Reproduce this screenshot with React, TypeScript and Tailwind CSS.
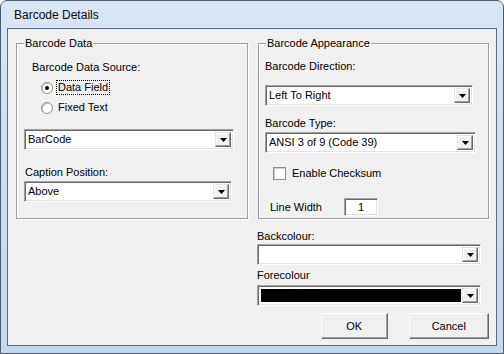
import React from 'react';

const font = "font-['Liberation_Sans',Arial,sans-serif]";

const Arrow = () => (
  <svg width="7" height="4" viewBox="0 0 7 4">
    <path d="M0 0H7L3.5 4Z" fill="#000" />
  </svg>
);

interface ComboProps {
  width: string;
  text?: string;
  black?: boolean;
}

const Combo: React.FC<ComboProps> = ({ width, text, black }) => (
  <div
    className={`${width} h-[21px] flex items-stretch border border-t-[#a0a0a0] border-l-[#a0a0a0] border-b-white border-r-white bg-white shadow-[inset_1px_1px_0_#696969,inset_-1px_-1px_0_#e3e3e3] p-[2px]`}
  >
    <div className="flex-1 flex items-center pl-[1px] pr-[1px]">
      {black ? (
        <div className="w-full h-[13px] bg-black" />
      ) : (
        <span className="text-[11px] leading-[13px] text-black">{text}</span>
      )}
    </div>
    <div className="w-[16px] flex items-center justify-center bg-[#f0f0f0] border border-t-[#e3e3e3] border-l-[#e3e3e3] border-b-[#696969] border-r-[#696969] shadow-[inset_-1px_-1px_0_#a0a0a0,inset_1px_1px_0_#fff]">
      <Arrow />
    </div>
  </div>
);

const Group: React.FC<{ title: string; className: string; children: React.ReactNode }> = ({
  title,
  className,
  children,
}) => (
  <div className={`relative border border-[#a0a0a0] shadow-[inset_1px_1px_0_#fff,1px_1px_0_#fff] ${className}`}>
    <span className="absolute -top-[7px] left-[7px] bg-[#f0f0f0] px-[1px] text-[11px] leading-[13px] text-black">
      {title}
    </span>
    {children}
  </div>
);

const Radio: React.FC<{ checked?: boolean; label: string; focus?: boolean }> = ({ checked, label, focus }) => (
  <div className="flex items-center h-[13px]">
    <div className="w-[12px] h-[12px] rounded-full border border-[#8f8f8f] bg-white shadow-[inset_1px_1px_0_#c8c8c8] flex items-center justify-center">
      {checked && <div className="w-[4px] h-[4px] rounded-full bg-black" />}
    </div>
    <span
      className={`ml-[4px] px-[1px] text-[11px] leading-[13px] text-black ${
        focus ? 'outline-1 outline-dotted outline-black' : ''
      }`}
    >
      {label}
    </span>
  </div>
);

const Button: React.FC<{ width: string; label: string }> = ({ width, label }) => (
  <div
    className={`${width} h-[26px] flex items-center justify-center bg-[#f0f0f0] border border-t-white border-l-white border-b-[#696969] border-r-[#696969] shadow-[inset_-1px_-1px_0_#a0a0a0] text-[11px] text-black`}
  >
    {label}
  </div>
);

const App: React.FC = () => {
  return (
    <div className={`${font} w-[504px] h-[354px] overflow-hidden`}>
      <div className="w-full h-full flex flex-col rounded-t-[7px] border border-[#4b5c70] bg-gradient-to-b from-[#d9e6f4] via-[#ccdcef] to-[#c3d7ee] px-[6px] pb-[7px]">
        {/* Title bar */}
        <div className="h-[27px] flex items-center pl-[7px] text-[12px] text-[#0a0a0a]">Barcode Details</div>

        {/* Client area */}
        <div className="flex-1 border border-[#5a6a80] bg-[#f0f0f0] pl-[8px] pt-[14px] flex gap-[9px]">
          {/* Left column */}
          <Group title="Barcode Data" className="w-[232px] h-[176px] flex flex-col">
            <span className="ml-[15px] mt-[17px] text-[11px] leading-[13px] text-black">Barcode Data Source:</span>
            <div className="ml-[24px] mt-[7px] flex flex-col gap-[7px]">
              <Radio checked label="Data Field" focus />
              <Radio label="Fixed Text" />
            </div>
            <div className="ml-[7px] mt-[15px]">
              <Combo width="w-[210px]" text="BarCode" />
            </div>
            <span className="ml-[8px] mt-[16px] text-[11px] leading-[13px] text-black">Caption Position:</span>
            <div className="ml-[7px] mt-[2px]">
              <Combo width="w-[208px]" text="Above" />
            </div>
          </Group>

          {/* Right column */}
          <div className="w-[232px] flex flex-col">
            <Group title="Barcode Appearance" className="ml-[1px] w-[231px] h-[176px] flex flex-col">
              <span className="ml-[6px] mt-[16px] text-[11px] leading-[13px] text-black">Barcode Direction:</span>
              <div className="ml-[6px] mt-[12px]">
                <Combo width="w-[208px]" text="Left To Right" />
              </div>
              <span className="ml-[6px] mt-[11px] text-[11px] leading-[13px] text-black">Barcode Type:</span>
              <div className="ml-[6px] mt-[2px]">
                <Combo width="w-[211px]" text="ANSI 3 of 9 (Code 39)" />
              </div>
              <div className="ml-[14px] mt-[14px] flex items-center h-[13px]">
                <div className="w-[13px] h-[13px] border border-[#8f8f8f] bg-white shadow-[inset_1px_1px_0_#d0d0d0]" />
                <span className="ml-[6px] text-[11px] leading-[13px] text-black">Enable Checksum</span>
              </div>
              <div className="ml-[11px] mt-[18px] flex items-center">
                <span className="w-[74px] text-[11px] leading-[13px] text-black">Line Width</span>
                <div className="w-[34px] h-[18px] flex items-center justify-center bg-white border border-t-[#a0a0a0] border-l-[#a0a0a0] border-b-white border-r-white shadow-[inset_1px_1px_0_#696969,inset_-1px_-1px_0_#e3e3e3] text-[11px] text-black">
                  1
                </div>
              </div>
            </Group>

            <span className="mt-[11px] text-[11px] leading-[13px] text-black">Backcolour:</span>
            <div className="mt-[1px]">
              <Combo width="w-[224px]" />
            </div>
            <span className="mt-[4px] text-[11px] leading-[13px] text-black">Forecolour</span>
            <div className="mt-[3px]">
              <Combo width="w-[224px]" black />
            </div>
            <div className="mt-[7px] ml-[64px] flex gap-[21px]">
              <Button width="w-[67px]" label="OK" />
              <Button width="w-[81px]" label="Cancel" />
            </div>
          </div>
        </div>
      </div>
    </div>
  );
};

export default App;
